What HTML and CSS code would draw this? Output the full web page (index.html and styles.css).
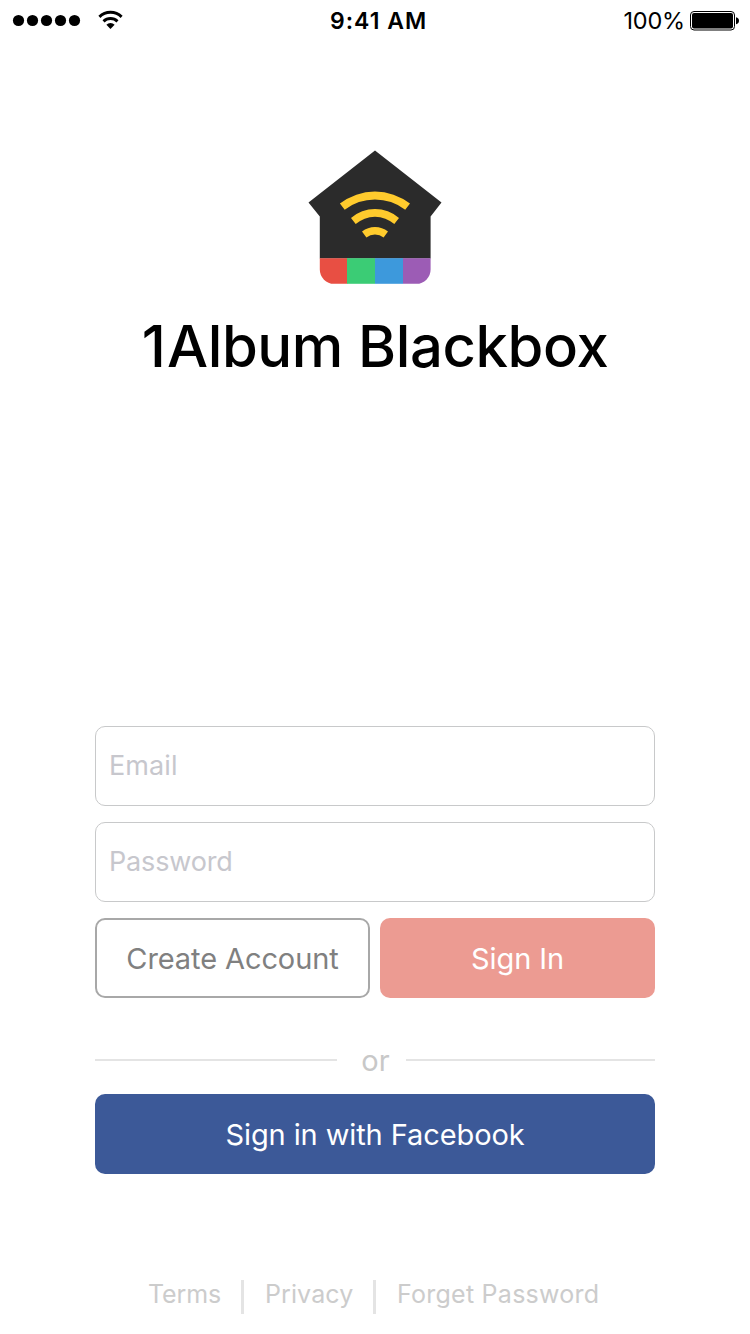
FILE: index.html
```html
<!DOCTYPE html>
<html lang="en">
<head>
<meta charset="utf-8">
<title>1Album Blackbox</title>
<link rel="stylesheet" href="styles.css">
</head>
<body>
<div class="screen">
  <header class="status">
    <svg class="signal" width="126" height="40" viewBox="0 0 126 40">
      <g fill="#000"><circle cx="18.5" cy="20.5" r="5.6"/><circle cx="32.5" cy="20.5" r="5.6"/><circle cx="46.5" cy="20.5" r="5.6"/><circle cx="60.5" cy="20.5" r="5.6"/><circle cx="74.5" cy="20.5" r="5.6"/>
      <path d="M98.4 15.7A17.5 17.5 0 0 1 122.6 15.7L120.6 17.9A14.5 14.5 0 0 0 100.4 17.9Z"/>
      <path d="M102.5 20.2A11.6 11.6 0 0 1 118.5 20.2L116.5 22.4A8.7 8.7 0 0 0 104.5 22.4Z"/>
      <path d="M106.4 24.7A5.8 5.8 0 0 1 114.6 24.7L110.5 29Z"/></g>
    </svg>
    <span class="time">9:41 AM</span>
    <div class="power">
      <span class="percent">100%</span>
      <svg width="50" height="20" viewBox="0 0 50 20"><rect x=".5" y=".5" width="44" height="18.5" rx="3.5" fill="#fff" stroke="#000"/><rect x="2" y="2" width="41" height="15.5" rx="2" fill="#000"/><path d="M46 6.2Q49 6.8 49 9.7T46 13.2Z"/></svg>
    </div>
  </header>
  <main class="main">
    <svg class="logo" width="134" height="135" viewBox="308 150 134 135">
      <path d="M375 150.5L441.5 202.5L430.6 216.5V258.5H319.8V216.5L308.5 202.5Z" fill="#2b2b2b"/>
      <path d="M319.8 258.2H347.4V283.8H334A14.2 14.2 0 0 1 319.8 269.6Z" fill="#e84f43"/>
      <path d="M347 258.2H375V283.8H347Z" fill="#3bcc75"/>
      <path d="M375 258.2H403V283.8H375Z" fill="#3d99dc"/>
      <path d="M403 258.2H430.6V269.6A14.2 14.2 0 0 1 416.4 283.8H403Z" fill="#9c5cb5"/>
      <g fill="#ffcb2d">
        <path d="M339.9 203.6A57 57 0 0 1 410 203.6L405.2 209.8A49.3 49.3 0 0 0 344.7 209.8Z"/>
        <path d="M351 217.9A36.5 36.5 0 0 1 399 217.9L394.3 224.1A29 29 0 0 0 355.7 224.1Z"/>
        <path d="M362 231.5A21 21 0 0 1 388 231.5L383.6 237.6A13.7 13.7 0 0 0 366.4 237.6Z"/>
      </g>
    </svg>
    <h1 class="title"><span class="numeral">1</span>Album Blackbox</h1>
    <form class="form">
      <input class="field" type="text" placeholder="Email" aria-label="Email">
      <input class="field field-password" type="password" placeholder="Password" aria-label="Password">
      <div class="actions">
        <button class="btn create" type="button"><span>Create Account</span></button>
        <button class="btn signin" type="button"><span>Sign In</span></button>
      </div>
      <div class="divider"><span class="or">or</span></div>
      <button class="btn facebook" type="button"><span>Sign in with Facebook</span></button>
    </form>
  </main>
  <footer class="links">
    <a class="link terms">Terms</a><a class="link privacy">Privacy</a><a class="link forget">Forget Password</a>
  </footer>
</div>
</body>
</html>
```
FILE: styles.css
```css
* { box-sizing: border-box; }
body { margin: 0; background: #fff; color: #000; font-family: Inter, "Liberation Sans", sans-serif; }
.screen { width: 750px; height: 1334px; display: flex; flex-direction: column; background: #fff; overflow: hidden; }
.status { height: 40px; display: grid; grid-template-columns: 330px 1fr auto; }
.signal { display: block; }
.time { font-size: 23px; font-weight: 600; line-height: 42px; letter-spacing: 1px; white-space: nowrap; }
.power { display: flex; padding-right: 10px; gap: 5px; }
.power svg { display: block; margin-top: 11px; }
.percent { font-size: 23.5px; line-height: 41px; letter-spacing: -0.2px; }
.main { display: flex; flex-direction: column; align-items: center; padding-top: 110px; }
.logo { display: block; }
.title { margin: 25px 0 0; height: 72px; font-size: 58px; font-weight: 500; line-height: 72px; letter-spacing: -0.4px; white-space: nowrap; }
.numeral { letter-spacing: 1.2px; }
.form { width: 560px; margin-top: 344px; display: flex; flex-direction: column; }
.field { display: block; width: 100%; height: 80px; margin: 0 0 16px; padding: 0 13px 2px; border: 1px solid #c8c9ca; border-radius: 10px; background: #fff; font: 400 27px Inter, "Liberation Sans", sans-serif; letter-spacing: 0.1px; }
.field::placeholder { color: #c7c7cd; opacity: 1; }
.field-password { letter-spacing: -0.15px; }
.actions { display: grid; grid-template-columns: 1fr 1fr; gap: 10px; }
.btn { height: 80px; margin: 0; padding: 0; border: 0; border-radius: 10px; font: 400 29px Inter, "Liberation Sans", sans-serif; letter-spacing: -0.1px; color: #fff; white-space: nowrap; }
.create { border: 2px solid #a8a8a8; background: #fff; color: #808080; }
.signin { background: #ec9b92; }
.divider { display: grid; grid-template-columns: 242px 69px 249px; align-items: center; height: 36px; margin: 44px 0 16px; }
.divider::before, .divider::after { content: ""; height: 2px; background: #e4e4e4; }
.or { text-align: center; padding: 2px 0 0 8px; font-size: 29px; line-height: 34px; color: #c8c8c8; }
.facebook { background: #3c5998; }
.links { display: flex; margin-top: 106px; padding-left: 148px; }
.link { height: 34px; font-size: 25px; line-height: 29px; color: #ccc; white-space: nowrap; }
.terms, .privacy { border-right: 3px solid #e4e4e4; }
.terms { width: 96px; letter-spacing: -0.1px; }
.privacy { width: 132px; padding-left: 21px; letter-spacing: 0.1px; }
.forget { padding-left: 21px; letter-spacing: 0.25px; }
```
